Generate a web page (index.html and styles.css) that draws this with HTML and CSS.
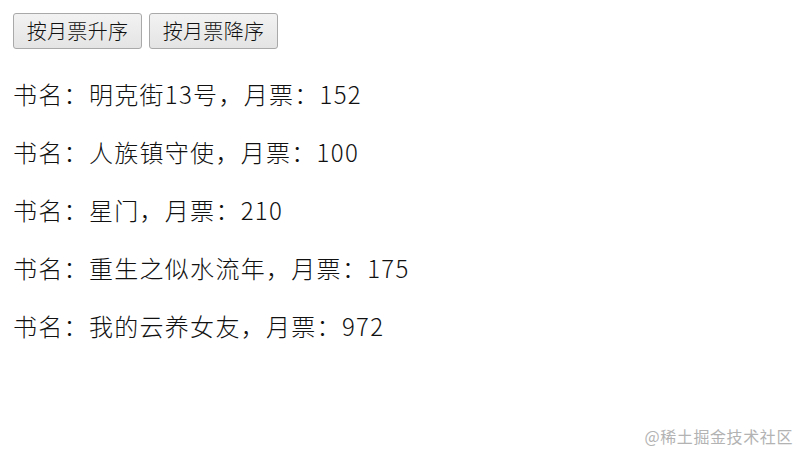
FILE: index.html
```html
<!DOCTYPE html>
<html lang="zh">
<head>
<meta charset="utf-8">
<link rel="stylesheet" href="styles.css">
</head>
<body>
<div class="page">
  <div class="toolbar">
    <button class="btn">按月票升序</button>
    <button class="btn">按月票降序</button>
  </div>
  <div class="list">
    <p class="item">书名：明克街13号，月票：152</p>
    <p class="item">书名：人族镇守使，月票：100</p>
    <p class="item">书名：星门，月票：210</p>
    <p class="item">书名：重生之似水流年，月票：175</p>
    <p class="item">书名：我的云养女友，月票：972</p>
  </div>
</div>
<div class="watermark">@稀土掘金技术社区</div>
</body>
</html>
```
FILE: styles.css
```css
html, body {
  margin: 0;
  padding: 0;
  background: #ffffff;
}
body {
  width: 800px;
  height: 450px;
  position: relative;
  overflow: hidden;
  font-family: "Noto Sans CJK SC", "Noto Sans", sans-serif;
  color: #111111;
}
.page {
  padding: 13px 12px 0 13px;
}
.toolbar {
  display: flex;
  gap: 7px;
}
.btn {
  height: 36px;
  width: 129px;
  padding: 0;
  font-family: "Noto Sans CJK SC", sans-serif;
  font-size: 20px;
  font-weight: 300;
  line-height: 34px;
  letter-spacing: 0.3px;
  color: #111111;
  background: linear-gradient(#f2f2f2, #e4e4e4);
  border: 1px solid #a9a9a9;
  border-radius: 3px;
}
.list {
  padding-top: 4px;
}
.item {
  margin: 24px 0 24px 0;
  font-size: 24px;
  font-weight: 300;
  line-height: 34px;
  letter-spacing: 1.3px;
}
.watermark {
  position: absolute;
  right: 7px;
  bottom: 3px;
  font-family: "Noto Sans CJK SC", sans-serif;
  font-size: 16px;
  line-height: 22px;
  letter-spacing: 0.6px;
  color: #b3b3b3;
}
```
